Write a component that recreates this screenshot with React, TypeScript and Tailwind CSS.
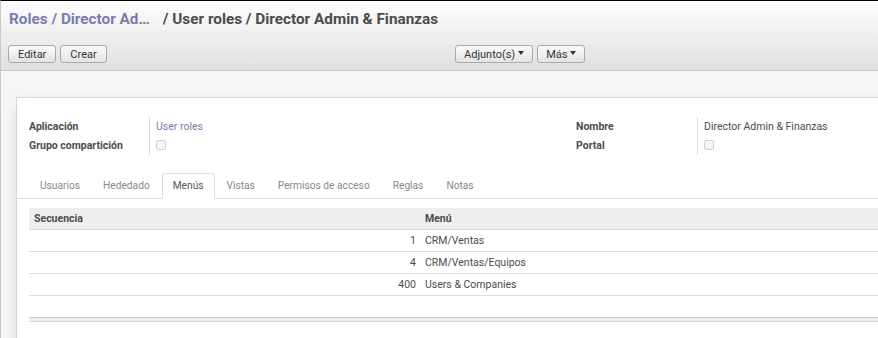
const tabs = ["Usuarios", "Hededado", "Menús", "Vistas", "Permisos de acceso", "Reglas", "Notas"];

const rows = [
    {seq: 1, menu: "CRM/Ventas"},
    {seq: 4, menu: "CRM/Ventas/Equipos"},
    {seq: 400, menu: "Users & Companies"},
];

function Caret() {
    return <span className="inline-block ml-[3px] align-middle border-x-[3.5px] border-x-transparent border-t-[4px] border-t-[#333] translate-y-[-1px]"/>;
}

function Btn({children, tight}: {children: React.ReactNode; tight?: boolean}) {
    return (
        <button
            className={(tight ? "px-[8px] " : "px-[9px] ") + "h-[18px] rounded-[3px] border border-[#a9a9a9] bg-gradient-to-b from-[#fafafa] to-[#e4e4e4] text-[11px] leading-none text-[#333] flex items-center"}>
            {children}
        </button>
    );
}

function Checkbox() {
    return <span className="block w-[10px] h-[10px] -mt-[2px] rounded-[2px] border border-[#d2d2d2] bg-[#f5f5f5]"/>;
}

function Field({label, children}: {label: string; children: React.ReactNode}) {
    return (
        <>
            <div className="h-[19px] flex items-center font-bold text-[#4c4c4c]">{label}</div>
            <div className="h-[19px] flex items-center pl-[6px] border-l border-[#dcdcdc]">{children}</div>
        </>
    );
}

export default function App() {
    return (
        <div className="w-[878px] h-[338px] overflow-hidden border-t border-black border-l border-l-[#c9c9c9] bg-[#f6f6f6] text-[10.5px] text-[#666]"
             style={{fontFamily: "Roboto, 'Liberation Sans', sans-serif"}}>
            {/* control panel */}
            <div className="h-[70px] border-b border-[#cbcbcb] bg-gradient-to-b from-[#fdfdfd] to-[#e0e0e0] px-[7px] pt-[6px]">
                <div className="h-[24px] flex items-center text-[15.3px] font-bold pl-[1px]">
                    <span className="text-[#7c7bad]">Roles / Director Ad…</span>
                    <span className="text-[#4c4c4c] ml-[13px]">/ User roles / Director Admin &amp; Finanzas</span>
                </div>
                <div className="flex mt-[14px]">
                    <div className="w-[447px] flex gap-[4px]">
                        <Btn>Editar</Btn>
                        <Btn>Crear</Btn>
                    </div>
                    <div className="flex gap-[4px]">
                        <Btn tight>Adjunto(s)<Caret/></Btn>
                        <Btn tight>Más<Caret/></Btn>
                    </div>
                </div>
            </div>

            {/* sheet */}
            <div className="pt-[26px] pl-[15px]">
                <div className="w-[1120px] h-[300px] bg-white border border-[#d6d6d6] shadow-[0_4px_16px_-6px_rgba(0,0,0,0.25)] pt-[19px]">
                    <div className="flex pl-[12px]">
                        <div className="w-[547px] grid grid-cols-[120px_1fr]">
                            <Field label="Aplicación"><span className="text-[#7c7bad]">User roles</span></Field>
                            <Field label="Grupo compartición"><Checkbox/></Field>
                        </div>
                        <div className="w-[547px] grid grid-cols-[121px_1fr]">
                            <Field label="Nombre"><span className="text-[#4c4c4c]">Director Admin &amp; Finanzas</span></Field>
                            <Field label="Portal"><Checkbox/></Field>
                        </div>
                    </div>

                    <div className="mt-[18px] flex pl-[12px] border-b border-[#dddddd] h-[26px] text-[10.2px]">
                        {tabs.map((t) => (
                            <div key={t}
                                 className={t === "Menús"
                                     ? "h-[26px] px-[10px] mr-[1px] flex items-center border border-[#dddddd] border-b-white rounded-t-[3px] bg-white text-[#555]"
                                     : "h-[25px] px-[10px] mr-[1px] flex items-center border border-transparent text-[#888]"}>
                                {t}
                            </div>
                        ))}
                    </div>

                    <div className="ml-[12px] mt-[9px]">
                        <div className="flex h-[22px] items-center bg-[#eeeeee] font-bold text-[#4c4c4c] border-b border-[#dddddd]">
                            <div className="w-[392px] pl-[5px]">Secuencia</div>
                            <div className="pl-[4px]">Menú</div>
                        </div>
                        {rows.map((r) => (
                            <div key={r.seq} className="flex h-[22px] items-center border-b border-[#dddddd] text-[#4c4c4c]">
                                <div className="w-[392px] text-right pr-[5px]">{r.seq}</div>
                                <div className="pl-[4px]">{r.menu}</div>
                            </div>
                        ))}
                        <div className="h-[21px]"/>
                        <div className="h-[5px] bg-[#eeeeee] border-y border-t-[#c8c8c8] border-b-[#d4d4d4]"/>
                    </div>
                </div>
            </div>
        </div>
    );
}
